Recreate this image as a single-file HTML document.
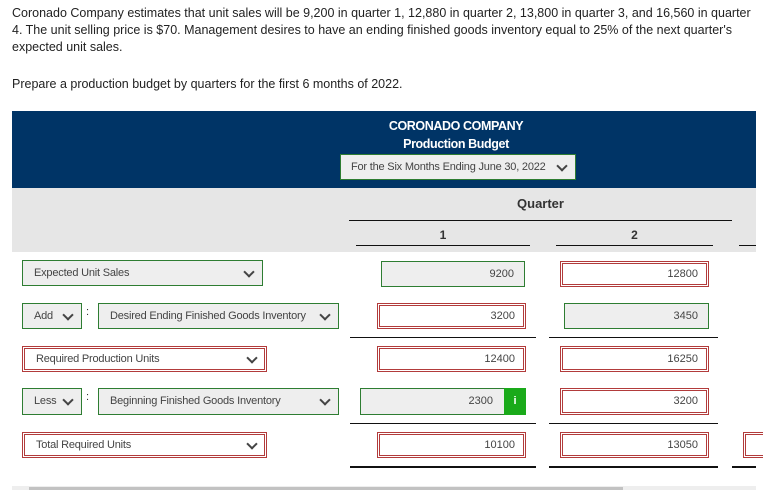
<!DOCTYPE html>
<html><head><meta charset="utf-8"><style>
body{margin:0;width:770px;height:490px;overflow:hidden;background:#fff;font-family:"Liberation Sans",sans-serif;color:#333;position:relative}
.t{position:absolute;left:12px;font-size:12.5px;line-height:17px;white-space:nowrap;letter-spacing:0;color:#222}
.a{position:absolute;box-sizing:border-box}
.g{border:1px solid #2e7d32;background:#eee}
.r{border:3px double #b23b3b;background:#fff}
.s{font-size:11px;color:#444;padding-left:11px;line-height:25px;letter-spacing:-0.2px;white-space:nowrap}
.r.s{line-height:21px;padding-left:11px}
.n{font-size:11px;color:#444;text-align:right;padding-right:10px;line-height:25px}
.r.n{line-height:21px;padding-right:8px}
.cv{position:absolute;right:9px;top:7px;width:6px;height:6px;border-right:2px solid #444;border-bottom:2px solid #444;transform:rotate(45deg)}
.r .cv{top:5px;right:8px}
.l{position:absolute;height:1px;background:#111}
</style></head><body>
<div class="t" style="top:5px">Coronado Company estimates that unit sales will be 9,200 in quarter 1, 12,880 in quarter 2, 13,800 in quarter 3, and 16,560 in quarter</div>
<div class="t" style="top:22px">4. The unit selling price is $70. Management desires to have an ending finished goods inventory equal to 25% of the next quarter's</div>
<div class="t" style="top:39px">expected unit sales.</div>
<div class="t" style="top:76px">Prepare a production budget by quarters for the first 6 months of 2022.</div>

<div class="a" style="left:12px;top:111px;width:744px;height:77px;background:#003466"></div>
<div class="a" style="left:340px;top:117px;width:232px;text-align:center;color:#fff;font-weight:bold;font-size:12.5px;line-height:18px;letter-spacing:-0.4px">CORONADO COMPANY<br>Production Budget</div>
<div class="a g s" style="left:340px;top:154px;width:236px;height:26px;color:#444;padding-left:10px">For the Six Months Ending June 30, 2022<span class="cv"></span></div>
<div class="a" style="left:12px;top:188px;width:744px;height:64px;background:#e6e6e6"></div>
<div class="a" style="left:349px;top:196px;width:383px;text-align:center;font-weight:bold;font-size:13px;color:#333">Quarter</div>
<div class="l" style="left:349px;top:220px;width:383px"></div>
<div class="a" style="left:356px;top:228px;width:174px;text-align:center;font-weight:bold;font-size:12px">1</div>
<div class="a" style="left:556px;top:228px;width:157px;text-align:center;font-weight:bold;font-size:12px">2</div>
<div class="l" style="left:356px;top:245px;width:174px"></div>
<div class="l" style="left:556px;top:245px;width:157px"></div>
<div class="l" style="left:739px;top:245px;width:17px"></div>

<div class="a g s" style="left:22px;top:260px;width:241px;height:26px">Expected Unit Sales<span class="cv"></span></div>
<div class="a g s" style="left:22px;top:303px;width:60px;height:26px">Add<span class="cv"></span></div>
<div class="a" style="left:86px;top:306px;font-size:11px">:</div>
<div class="a g s" style="left:98px;top:303px;width:241px;height:26px">Desired Ending Finished Goods Inventory<span class="cv"></span></div>
<div class="a r s" style="left:22px;top:346px;width:245px;height:26px">Required Production Units<span class="cv"></span></div>
<div class="a g s" style="left:22px;top:388px;width:60px;height:27px">Less<span class="cv"></span></div>
<div class="a" style="left:86px;top:391px;font-size:11px">:</div>
<div class="a g s" style="left:98px;top:388px;width:241px;height:27px">Beginning Finished Goods Inventory<span class="cv"></span></div>
<div class="a r s" style="left:22px;top:432px;width:245px;height:26px">Total Required Units<span class="cv"></span></div>

<div class="a g n" style="left:381px;top:261px;width:144px;height:26px">9200</div>
<div class="a r n" style="left:560px;top:261px;width:149px;height:26px">12800</div>
<div class="a r n" style="left:377px;top:303px;width:149px;height:26px">3200</div>
<div class="a g n" style="left:564px;top:303px;width:145px;height:26px">3450</div>
<div class="l" style="left:350px;top:337px;width:186px"></div>
<div class="l" style="left:549px;top:337px;width:169px"></div>
<div class="a r n" style="left:377px;top:346px;width:149px;height:26px">12400</div>
<div class="a r n" style="left:560px;top:346px;width:149px;height:26px">16250</div>
<div class="a g n" style="left:360px;top:388px;width:166px;height:27px;padding-right:32px">2300</div>
<div class="a" style="left:504px;top:388px;width:22px;height:27px;background:#1aaa1a;color:#fff;font-weight:bold;font-size:11px;text-align:center;line-height:27px">i</div>
<div class="a r n" style="left:560px;top:388px;width:149px;height:27px">3200</div>
<div class="l" style="left:350px;top:423px;width:186px"></div>
<div class="l" style="left:549px;top:423px;width:169px"></div>
<div class="a r n" style="left:377px;top:432px;width:149px;height:26px">10100</div>
<div class="a r n" style="left:560px;top:432px;width:149px;height:26px">13050</div>
<div class="a r" style="left:743px;top:432px;width:20px;height:26px;border-right:none"></div>
<div class="l" style="left:350px;top:466px;width:186px;height:2px"></div>
<div class="l" style="left:549px;top:466px;width:169px;height:2px"></div>
<div class="l" style="left:732px;top:466px;width:24px;height:2px"></div>
<div class="a" style="left:12px;top:486px;width:744px;height:4px;background:#eee"></div>
<div class="a" style="left:29px;top:487px;width:594px;height:3px;background:#c2c2c2"></div>
</body></html>
